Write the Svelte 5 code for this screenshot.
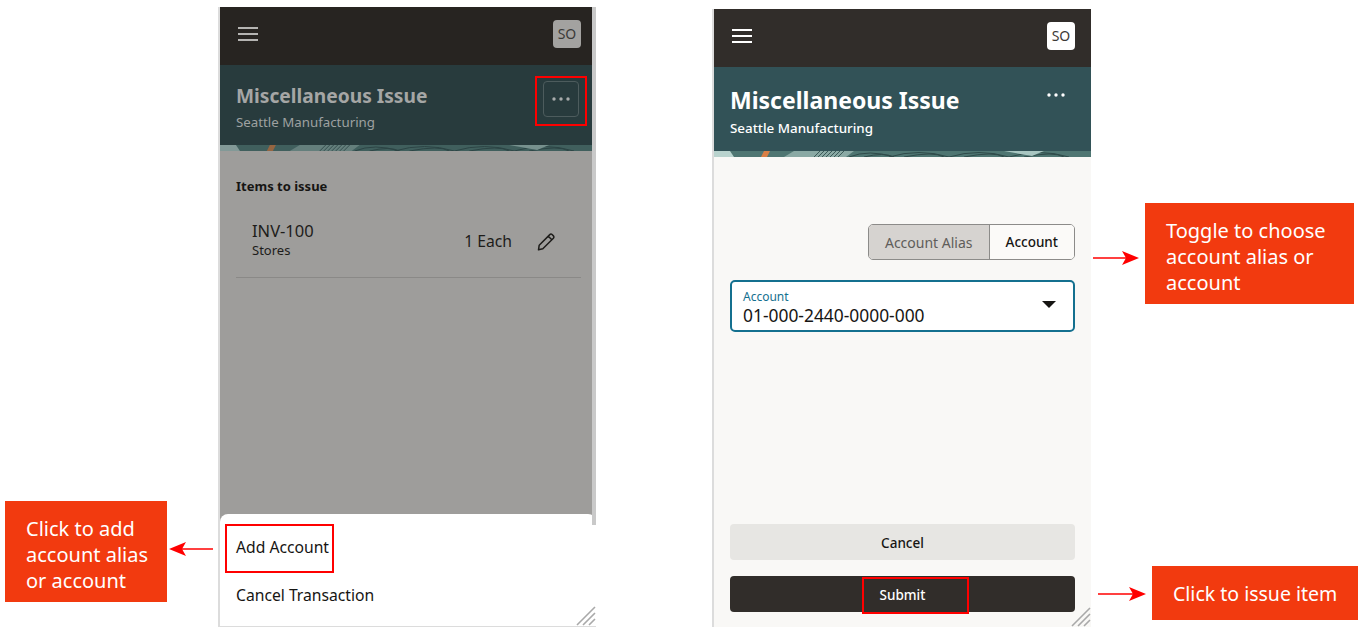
<script>
    const font = 'Noto Sans';
</script>

{#snippet strip()}
    <svg class="strip" viewBox="0 0 377 6" preserveAspectRatio="none" aria-hidden="true">
        <rect width="377" height="6" fill="#4f7672" />
        <path d="M0 0h16l4 6H0z" fill="#b9d3ce" />
        <path d="M50 0h6l-3 6h-6z" fill="#d97f45" />
        <path d="M80 0h60l-8 6H70z" fill="#8aa9a4" />
        <path d="M100 6l6-6M104 6l6-6M108 6l6-6M112 6l6-6M116 6l6-6M120 6l6-6M124 6l6-6" stroke="#3c5a58" stroke-width="1" />
        <path d="M135 6q20-8 45 0M175 6q30-9 60 0M235 6q30-9 60 0M295 6q30-9 60 0M150 6q20-5 30 0M190 6q30-6 40 0M250 6q30-6 40 0M310 6q30-6 40 0" stroke="#2f4b4a" fill="none" stroke-width="1" />
        <path d="M290 0h40l-12 5z" fill="#a8c6c1" />
    </svg>
{/snippet}

{#snippet grip()}
    <svg class="grip" viewBox="0 0 20 20" aria-hidden="true">
        <path d="M1 19L19 1M7 19L19 7M13 19L19 13" stroke="#a9a9a9" stroke-width="1.6" fill="none" />
    </svg>
{/snippet}

{#snippet dots()}
    <svg width="18" height="4" viewBox="0 0 18 4" aria-hidden="true">
        <circle cx="2" cy="2" r="1.7" fill="currentColor" />
        <circle cx="9" cy="2" r="1.7" fill="currentColor" />
        <circle cx="16" cy="2" r="1.7" fill="currentColor" />
    </svg>
{/snippet}

<div class="canvas" style:font-family={`"${font}", sans-serif`}>
    <!-- left phone, dimmed behind the action sheet -->
    <section class="phone dimmed">
        <header class="topbar">
            <div class="burger"><i></i><i></i><i></i></div>
            <span class="avatar">SO</span>
        </header>
        <div class="band">
            <div class="band-main">
                <div class="titles">
                    <h1>Miscellaneous Issue</h1>
                    <p>Seattle Manufacturing</p>
                </div>
                <button class="more">{@render dots()}</button>
            </div>
            {@render strip()}
        </div>
        <div class="content">
            <h2>Items to issue</h2>
            <div class="item">
                <div class="item-name">
                    <span class="code">INV-100</span>
                    <span class="sub">Stores</span>
                </div>
                <span class="qty">1 Each</span>
                <svg class="pencil" width="19" height="19" viewBox="0 0 19 19" aria-hidden="true">
                    <path d="M2.2 13.2L12.8 2.6a1.6 1.6 0 0 1 2.3 0l1.3 1.3a1.6 1.6 0 0 1 0 2.3L5.8 16.8l-4.3 1zM11.3 4.2l3.5 3.5" fill="none" stroke="#1d1c1a" stroke-width="1.5" stroke-linejoin="round" />
                </svg>
            </div>
        </div>
        <div class="sheet">
            <div class="sheet-row">Add Account</div>
            <div class="sheet-row">Cancel Transaction</div>
        </div>
        <div class="scrollbar"></div>
        {@render grip()}
    </section>

    <!-- right phone -->
    <section class="phone active">
        <header class="topbar">
            <div class="burger"><i></i><i></i><i></i></div>
            <span class="avatar">SO</span>
        </header>
        <div class="band">
            <div class="band-main">
                <div class="titles">
                    <h1>Miscellaneous Issue</h1>
                    <p>Seattle Manufacturing</p>
                </div>
                <button class="more">{@render dots()}</button>
            </div>
            {@render strip()}
        </div>
        <div class="content form">
            <div class="toggle">
                <button class="seg on">Account Alias</button>
                <button class="seg">Account</button>
            </div>
            <div class="select">
                <div class="select-text">
                    <label for="acct">Account</label>
                    <span id="acct">01-000-2440-0000-000</span>
                </div>
                <span class="caret"></span>
            </div>
            <div class="actions">
                <button class="btn">Cancel</button>
                <button class="btn dark">Submit</button>
            </div>
        </div>
        {@render grip()}
    </section>

    <div class="mark m1"></div>
    <div class="mark m2"></div>
    <div class="mark m3"></div>

    <div class="note n1">Click to add account alias or account</div>
    <div class="note n2">Toggle to choose account alias or account</div>
    <div class="note n3">Click to issue item</div>

    <svg class="arrow a1" width="44" height="14" viewBox="0 0 44 14" aria-hidden="true">
        <path d="M44 7H10" stroke="#f00" stroke-width="1.6" />
        <path d="M0 7l17-7-4 7 4 7z" fill="#f00" />
    </svg>
    <svg class="arrow a2" width="46" height="14" viewBox="0 0 46 14" aria-hidden="true">
        <path d="M0 7h36" stroke="#f00" stroke-width="1.6" />
        <path d="M46 7L29 0l4 7-4 7z" fill="#f00" />
    </svg>
    <svg class="arrow a3" width="48" height="14" viewBox="0 0 48 14" aria-hidden="true">
        <path d="M0 7h38" stroke="#f00" stroke-width="1.6" />
        <path d="M48 7L31 0l4 7-4 7z" fill="#f00" />
    </svg>
</div>

<style>
    :global(body) {
        margin: 0;
        background: #fff;
    }

    .canvas {
        position: relative;
        width: 1364px;
        height: 637px;
        overflow: hidden;
        background: #fff;
    }

    .phone {
        position: absolute;
        display: flex;
        flex-direction: column;
        box-sizing: border-box;
        border-left: 2px solid #dcdcdc;
    }

    .dimmed {
        left: 218px;
        top: 7px;
        width: 378px;
        height: 620px;
        background: #9e9d9b;
        border-bottom: 1px solid #dcdcdc;
    }

    .active {
        left: 712px;
        top: 9px;
        width: 379px;
        height: 618px;
        background: #f9f8f6;
    }

    .topbar {
        flex: none;
        height: 58px;
        display: flex;
        align-items: center;
        justify-content: space-between;
        box-sizing: border-box;
        padding: 0 15px 4px 18px;
    }

    .dimmed .topbar { background: #272421; }
    .active .topbar { background: #312d2a; padding: 0 16px 4px 18px; }

    .burger {
        width: 20px;
        display: flex;
        flex-direction: column;
        gap: 4px;
    }

    .burger i {
        display: block;
        height: 2px;
        background: #b5b4b2;
    }

    .active .burger i { background: #fff; }

    .avatar {
        width: 28px;
        height: 28px;
        border-radius: 4px;
        background: #a3a2a0;
        color: #3b3a38;
        font-size: 14px;
        line-height: 28px;
        text-align: center;
    }

    .active .avatar {
        background: #fff;
        color: #3d3a37;
    }

    .band {
        flex: none;
        display: flex;
        flex-direction: column;
    }

    .dimmed .band { height: 86px; background: #283b3d; }
    .active .band { height: 90px; background: #325257; }

    .band-main {
        flex: 1;
        display: flex;
        justify-content: space-between;
        align-items: flex-start;
    }

    .dimmed .band-main { padding: 16px 17px 0 16px; }
    .active .band-main { padding: 17px 26px 0 16px; }

    .strip {
        display: block;
        flex: none;
        width: 100%;
        height: 6px;
    }

    .dimmed .strip { opacity: 0.62; }

    h1 {
        margin: 0;
        font-weight: 700;
    }

    .titles p {
        margin: 0;
        line-height: 24px;
    }

    .dimmed h1 {
        font-size: 19.2px;
        line-height: 29px;
        color: #a5a6a5;
    }

    .dimmed .titles p {
        font-size: 13.3px;
        color: #9ea1a1;
    }

    .active h1 {
        font-size: 23px;
        line-height: 32px;
        color: #fff;
    }

    .active .titles p {
        font-size: 13.4px;
        font-weight: 500;
        color: #fff;
    }

    button {
        font: inherit;
        padding: 0;
        cursor: pointer;
    }

    .more {
        width: 36px;
        height: 36px;
        display: flex;
        align-items: center;
        justify-content: center;
        background: none;
        border: 1px solid #4d5c5d;
        border-radius: 4px;
        color: #a9acac;
    }

    .active .more {
        width: 18px;
        height: 18px;
        margin-top: 2px;
        border: 0;
        color: #fff;
    }

    .content {
        flex: 1;
        display: flex;
        flex-direction: column;
        padding: 0 15px 0 16px;
        min-height: 0;
    }

    h2 {
        margin: 25px 0 0;
        font-size: 13px;
        font-weight: 700;
        line-height: 20px;
        color: #161513;
    }

    .item {
        display: flex;
        align-items: center;
        height: 72px;
        margin-top: 9px;
        padding: 0 25px 0 16px;
        border-bottom: 1px solid #8a8987;
        color: #1d1c1a;
    }

    .item-name {
        flex: 1;
        display: flex;
        flex-direction: column;
        margin-bottom: 4px;
    }

    .code { font-size: 16.5px; line-height: 22px; }
    .sub { font-size: 13px; line-height: 17px; }

    .qty {
        font-size: 15.7px;
        margin-right: 25px;
    }

    .sheet {
        flex: none;
        height: 112px;
        box-sizing: border-box;
        padding: 9px 16px 0;
        background: #fff;
        border-radius: 8px 8px 0 0;
        font-size: 15.7px;
        color: #161513;
    }

    .sheet-row {
        height: 48px;
        line-height: 48px;
    }

    .scrollbar {
        position: absolute;
        right: 0;
        top: 0;
        width: 4px;
        height: 518px;
        background: #c9c9c9;
    }

    .grip {
        position: absolute;
        right: 0;
        bottom: 0;
        width: 20px;
        height: 20px;
    }

    .form {
        padding: 0 16px 15px;
    }

    .toggle {
        align-self: flex-end;
        display: flex;
        height: 36px;
        margin-top: 67px;
        box-sizing: border-box;
        border: 1px solid #8c8b89;
        border-radius: 5px;
        overflow: hidden;
        font-size: 13.5px;
    }

    .seg {
        border: 0;
        background: #fbfaf8;
        color: #161513;
        font-weight: 500;
        padding: 0 16px;
    }

    .seg.on {
        background: #d6d3d0;
        color: #5f5d5a;
        font-size: 14px;
        font-weight: 400;
        border-right: 1px solid #8c8b89;
    }

    .select {
        display: flex;
        align-items: center;
        justify-content: space-between;
        height: 52px;
        margin-top: 20px;
        box-sizing: border-box;
        padding: 0 17px 0 11px;
        background: #fff;
        border: 2px solid #14708f;
        border-radius: 5px;
    }

    .select-text {
        display: flex;
        flex-direction: column;
        gap: 1px;
        padding-top: 2px;
    }

    .select label {
        font-size: 12px;
        line-height: 14px;
        color: #14708f;
    }

    .select span#acct {
        font-size: 17.4px;
        line-height: 20px;
        color: #161513;
    }

    .caret {
        width: 0;
        height: 0;
        margin-bottom: 4px;
        border-left: 7px solid transparent;
        border-right: 7px solid transparent;
        border-top: 7px solid #161513;
    }

    .actions {
        margin-top: auto;
        display: flex;
        flex-direction: column;
        gap: 16px;
    }

    .btn {
        height: 36px;
        padding-top: 2px;
        border: 0;
        border-radius: 4px;
        background: #e7e6e3;
        color: #161513;
        font-size: 13.5px;
        font-weight: 500;
    }

    .btn.dark {
        background: #312d2a;
        color: #fff;
    }

    .mark {
        position: absolute;
        box-sizing: border-box;
        border: 2px solid #f00;
    }

    .m1 { left: 535px; top: 76px; width: 52px; height: 50px; }
    .m2 { left: 225px; top: 524px; width: 109px; height: 49px; }
    .m3 { left: 862px; top: 577px; width: 107px; height: 37px; }

    .note {
        position: absolute;
        box-sizing: border-box;
        background: #f23a0f;
        color: #fff;
        font-size: 20px;
        line-height: 26px;
        padding: 15px 0 15px 21px;
    }

    .n1 { left: 5px; top: 501px; width: 162px; height: 101px; }
    .n2 { left: 1145px; top: 203px; width: 209px; height: 101px; padding-right: 21px; }
    .n3 { left: 1152px; top: 566px; width: 206px; height: 54px; white-space: nowrap; font-size: 19.5px; }

    .arrow { position: absolute; }
    .a1 { left: 169px; top: 542px; }
    .a2 { left: 1093px; top: 251px; }
    .a3 { left: 1098px; top: 587px; }
</style>
